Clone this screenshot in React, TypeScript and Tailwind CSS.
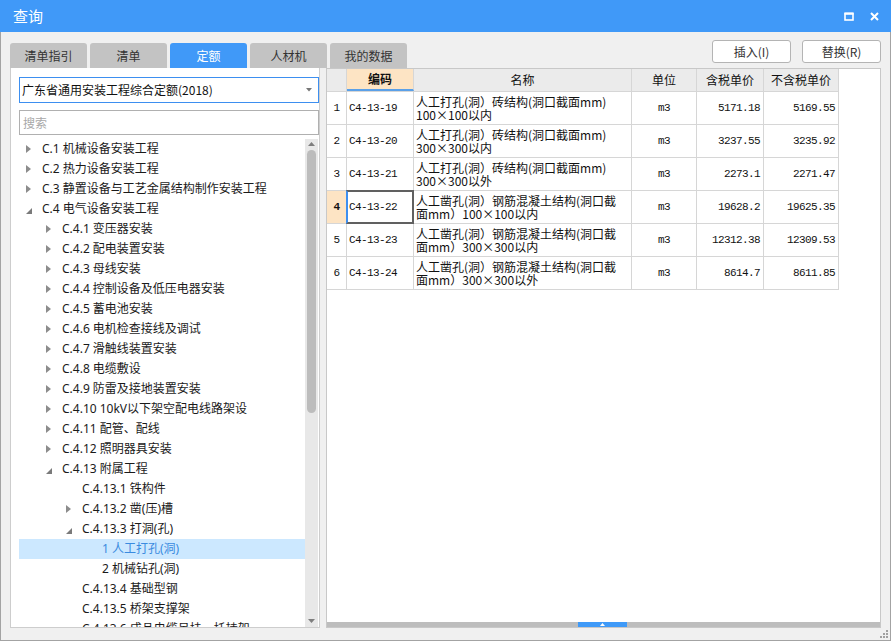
import React from 'react';

type Arrow = 'c' | 'e' | '';
type TreeNode = { level: number; text: string; arrow: Arrow; selected?: boolean };

const tree: TreeNode[] = [
  { level: 0, text: 'C.1 机械设备安装工程', arrow: 'c' },
  { level: 0, text: 'C.2 热力设备安装工程', arrow: 'c' },
  { level: 0, text: 'C.3 静置设备与工艺金属结构制作安装工程', arrow: 'c' },
  { level: 0, text: 'C.4 电气设备安装工程', arrow: 'e' },
  { level: 1, text: 'C.4.1 变压器安装', arrow: 'c' },
  { level: 1, text: 'C.4.2 配电装置安装', arrow: 'c' },
  { level: 1, text: 'C.4.3 母线安装', arrow: 'c' },
  { level: 1, text: 'C.4.4 控制设备及低压电器安装', arrow: 'c' },
  { level: 1, text: 'C.4.5 蓄电池安装', arrow: 'c' },
  { level: 1, text: 'C.4.6 电机检查接线及调试', arrow: 'c' },
  { level: 1, text: 'C.4.7 滑触线装置安装', arrow: 'c' },
  { level: 1, text: 'C.4.8 电缆敷设', arrow: 'c' },
  { level: 1, text: 'C.4.9 防雷及接地装置安装', arrow: 'c' },
  { level: 1, text: 'C.4.10 10kV以下架空配电线路架设', arrow: 'c' },
  { level: 1, text: 'C.4.11 配管、配线', arrow: 'c' },
  { level: 1, text: 'C.4.12 照明器具安装', arrow: 'c' },
  { level: 1, text: 'C.4.13 附属工程', arrow: 'e' },
  { level: 2, text: 'C.4.13.1 铁构件', arrow: '' },
  { level: 2, text: 'C.4.13.2 凿(压)槽', arrow: 'c' },
  { level: 2, text: 'C.4.13.3 打洞(孔)', arrow: 'e' },
  { level: 3, text: '1 人工打孔(洞)', arrow: '', selected: true },
  { level: 3, text: '2 机械钻孔(洞)', arrow: '' },
  { level: 2, text: 'C.4.13.4 基础型钢', arrow: '' },
  { level: 2, text: 'C.4.13.5 桥架支撑架', arrow: '' },
  { level: 2, text: 'C.4.13.6 成品电缆吊挂、托持架', arrow: '' },
];

const indent = ['pl-[7px]', 'pl-[27px]', 'pl-[47px]', 'pl-[67px]'];

const rows = [
  { n: 1, code: 'C4-13-19', name: ['人工打孔(洞）砖结构(洞口截面mm)', '100×100以内'], unit: 'm3', p1: '5171.18', p2: '5169.55' },
  { n: 2, code: 'C4-13-20', name: ['人工打孔(洞）砖结构(洞口截面mm)', '300×300以内'], unit: 'm3', p1: '3237.55', p2: '3235.92' },
  { n: 3, code: 'C4-13-21', name: ['人工打孔(洞）砖结构(洞口截面mm)', '300×300以外'], unit: 'm3', p1: '2273.1', p2: '2271.47' },
  { n: 4, code: 'C4-13-22', name: ['人工凿孔(洞）钢筋混凝土结构(洞口截', '面mm）100×100以内'], unit: 'm3', p1: '19628.2', p2: '19625.35' },
  { n: 5, code: 'C4-13-23', name: ['人工凿孔(洞）钢筋混凝土结构(洞口截', '面mm）300×300以内'], unit: 'm3', p1: '12312.38', p2: '12309.53' },
  { n: 6, code: 'C4-13-24', name: ['人工凿孔(洞）钢筋混凝土结构(洞口截', '面mm）300×300以外'], unit: 'm3', p1: '8614.7', p2: '8611.85' },
];

const tabs = ['清单指引', '清单', '定额', '人材机', '我的数据'];

const TreeArrow = ({ kind }: { kind: Arrow }) => {
  if (kind === 'c')
    return (
      <svg width="5" height="8" viewBox="0 0 5 8">
        <path d="M0 0L5 4L0 8Z" fill="#8c8c8c" />
      </svg>
    );
  if (kind === 'e')
    return (
      <svg width="6" height="6" viewBox="0 0 6 6" className="mt-[3px]">
        <path d="M6 0L6 6L0 6Z" fill="#7a7a7a" />
      </svg>
    );
  return null;
};

const mono = "font-['Liberation_Mono',monospace] text-[11px] tracking-[-0.6px]";
const line = 'border-r border-[#d6d6d6]';

export default function App() {
  return (
    <div className="w-[891px] h-[641px] flex flex-col bg-[#f0f0f0] text-[#222] font-['Noto_Sans','Noto_Sans_CJK_SC',sans-serif] overflow-hidden">
      {/* title bar */}
      <div className="h-[32px] shrink-0 bg-[#4099f8] flex items-center justify-between pl-[13px] pr-[12px]">
        <span className="text-white text-[15px] font-['Noto_Sans_CJK_SC',sans-serif]">查询</span>
        <div className="flex items-center gap-[16px]">
          <svg width="10" height="9" viewBox="0 0 10 9">
            <rect x="1" y="1.5" width="8" height="6.5" fill="none" stroke="#fff" strokeWidth="1.6" />
            <rect x="0.5" y="0.5" width="9" height="2.2" fill="#fff" />
          </svg>
          <svg width="9" height="9" viewBox="0 0 9 9">
            <path d="M1 1L8 8M8 1L1 8" stroke="#fff" strokeWidth="2" />
          </svg>
        </div>
      </div>

      <div className="flex-1 min-h-0 relative flex flex-col border-x border-b border-[#a3a3a3] pl-[9px] pr-[9px] pb-[12px]">
        {/* tabs + buttons */}
        <div className="h-[36px] shrink-0 flex justify-between">
          <div className="flex items-end gap-[3px]">
            {tabs.map(t => (
              <div
                key={t}
                className={`w-[77px] h-[25px] rounded-t-[3px] flex items-center justify-center text-[12px] font-['Noto_Sans_CJK_SC',sans-serif] ${
                  t === '定额' ? 'bg-[#4099f8] text-white' : 'bg-[#c3c3c3] text-[#333]'
                }`}
              >
                {t}
              </div>
            ))}
          </div>
          <div className="flex items-start gap-[11px] pt-[8px]">
            {['插入(I)', '替换(R)'].map(b => (
              <div
                key={b}
                className="w-[79px] h-[23px] bg-white border border-[#b4b4b4] rounded-[3px] flex items-center justify-center text-[12px] text-[#333] font-['Noto_Sans_CJK_SC',sans-serif]"
              >
                {b}
              </div>
            ))}
          </div>
        </div>

        {/* main content */}
        <div className="flex-1 min-h-0 flex gap-[6px]">
          {/* left panel */}
          <div className="w-[310px] shrink-0 bg-white border-x border-b border-[#cdcdcd] pl-[8px] pt-[9px] flex flex-col">
            <div className="h-[26px] w-[300px] border border-[#3d8ff0] flex items-center justify-between pl-[2px] pr-[6px]">
              <span className="text-[12px] text-[#111] font-['Noto_Sans_CJK_SC',sans-serif]">广东省通用安装工程综合定额(2018)</span>
              <svg width="6" height="4" viewBox="0 0 6 4">
                <path d="M0 0L6 0L3 3.5Z" fill="#777" />
              </svg>
            </div>
            <div className="mt-[7px] h-[25px] w-[300px] border border-[#b0b0b0] flex items-center pl-[3px]">
              <span className="text-[12px] text-[#a8a8a8] font-['Noto_Sans_CJK_SC',sans-serif]">搜索</span>
            </div>
            <div className="mt-[4px] flex-1 min-h-0 flex">
              <div className="flex-1 min-w-0 overflow-hidden">
                {tree.map((n, i) => (
                  <div
                    key={i}
                    className={`h-[20px] flex items-center whitespace-nowrap text-[12px] ${indent[n.level]} ${
                      n.selected ? 'bg-[#cce8ff] text-[#3a8be0]' : 'text-[#1a1a1a]'
                    }`}
                  >
                    <span className="w-[16px] shrink-0 flex items-center">
                      <TreeArrow kind={n.arrow} />
                    </span>
                    <span>{n.text}</span>
                  </div>
                ))}
              </div>
              <div className="w-[13px] shrink-0 mr-[1px] bg-[#e8e8e8] flex flex-col items-center">
                <div className="h-[10px] flex items-center">
                  <svg width="7" height="4" viewBox="0 0 7 4">
                    <path d="M0 4L3.5 0L7 4Z" fill="#7e7e7e" />
                  </svg>
                </div>
                <div className="mt-[1px] h-[263px] w-[9px] rounded-full bg-[#bcbcbc]" />
                <div className="flex-1" />
                <div className="h-[10px] mb-[1px] flex items-center">
                  <svg width="7" height="4" viewBox="0 0 7 4">
                    <path d="M0 0L7 0L3.5 4Z" fill="#7e7e7e" />
                  </svg>
                </div>
              </div>
            </div>
          </div>

          {/* grid */}
          <div className="flex-1 min-w-0 bg-white border border-[#c8c8c8] flex flex-col">
            <div className="flex-1 min-h-0 font-['Noto_Sans_CJK_SC',sans-serif] text-[12px] text-[#111]">
              <div className="flex h-[23px] w-[512px] bg-[#ebebeb] border-b border-[#d6d6d6]">
                <div className={`w-[20px] ${line}`} />
                <div className={`w-[67px] ${line} bg-[#fde4c4] border-b-2 border-b-[#5aa0e8] flex items-center justify-center font-bold`}>编码</div>
                <div className={`w-[218px] ${line} flex items-center justify-center`}>名称</div>
                <div className={`w-[65px] ${line} flex items-center justify-center`}>单位</div>
                <div className={`w-[67px] ${line} flex items-center justify-center`}>含税单价</div>
                <div className={`w-[75px] ${line} flex items-center justify-center`}>不含税单价</div>
              </div>
              {rows.map(r => (
                <div key={r.n} className="flex h-[33px] w-[512px] border-b border-[#d6d6d6]">
                  <div
                    className={`w-[20px] ${line} flex items-center justify-center ${mono} ${
                      r.n === 4 ? 'bg-[#fde4c4] font-bold' : ''
                    }`}
                  >
                    {r.n}
                  </div>
                  <div className={`w-[67px] ${line} relative flex items-center pl-[2px] ${mono}`}>
                    {r.code}
                    {r.n === 4 && (
                      <div className="absolute -left-px -top-px -bottom-px right-[-1px] border-2 border-[#606060] border-l-[#3d8ff0]" />
                    )}
                  </div>
                  <div className={`w-[218px] ${line} pl-[2px] pt-[3px] leading-[13px] whitespace-nowrap overflow-hidden`}>
                    <div>{r.name[0]}</div>
                    <div>{r.name[1]}</div>
                  </div>
                  <div className={`w-[65px] ${line} flex items-center justify-center ${mono}`}>{r.unit}</div>
                  <div className={`w-[67px] ${line} flex items-center justify-end pr-[3px] ${mono}`}>{r.p1}</div>
                  <div className={`w-[75px] ${line} flex items-center justify-end pr-[3px] ${mono}`}>{r.p2}</div>
                </div>
              ))}
            </div>
            <div className="h-[5px] shrink-0 bg-[#bdbdbd] flex">
              <div className="ml-[251px] w-[49px] bg-[#3f9af8] flex items-center justify-center">
                <svg width="5" height="3" viewBox="0 0 5 3">
                  <path d="M0 3L2.5 0L5 3Z" fill="#fff" />
                </svg>
              </div>
            </div>
          </div>
        </div>

        {/* resize grip */}
        <div className="absolute right-[2px] bottom-[2px] grid grid-cols-3 gap-[1px]">
          <span className="w-[2px] h-[2px]" />
          <span className="w-[2px] h-[2px]" />
          <span className="w-[2px] h-[2px] bg-[#a0a0a0]" />
          <span className="w-[2px] h-[2px]" />
          <span className="w-[2px] h-[2px] bg-[#a0a0a0]" />
          <span className="w-[2px] h-[2px] bg-[#a0a0a0]" />
          <span className="w-[2px] h-[2px] bg-[#a0a0a0]" />
          <span className="w-[2px] h-[2px] bg-[#a0a0a0]" />
          <span className="w-[2px] h-[2px] bg-[#a0a0a0]" />
        </div>
      </div>
    </div>
  );
}
